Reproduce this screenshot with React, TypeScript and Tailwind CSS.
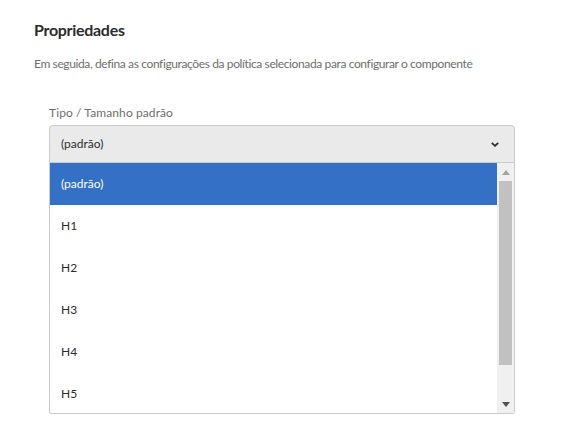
const items = ['H1', 'H2', 'H3', 'H4', 'H5'];

const App = () => {
  return (
    <div className="w-[562px] h-[442px] bg-white pl-[34px] pt-[18px] font-['Lato',sans-serif] overflow-hidden">
      <h2 className="text-[16px] font-bold text-[#2c2c2c] leading-[24px] tracking-[-0.3px]">Propriedades</h2>
      <p className="mt-[14px] text-[12px] text-[#6e6e6e] leading-[16px] tracking-[-0.38px]">
        Em seguida, defina as configurações da política selecionada para configurar o componente
      </p>
      <div className="ml-[15px] mt-[33px] w-[466px]">
        <label className="block text-[12px] text-[#6e6e6e] leading-[16px] tracking-[0.1px]">Tipo / Tamanho padrão</label>
        <div className="mt-[4px] h-[38px] flex items-center justify-between pl-[11px] pr-[15px] bg-[#eaeaea] border border-[#cacaca] rounded-t-[4px] text-[12px] text-[#2c2c2c]">
          <span>(padrão)</span>
          <svg width="8" height="5" viewBox="0 0 8 5">
            <path d="M0.8 0.8l3.2 3L7.2 0.8" fill="none" stroke="#2c2c2c" strokeWidth="1.8" />
          </svg>
        </div>
        <div className="h-[251px] flex border border-t-0 border-[#cacaca] rounded-b-[3px] bg-white">
          <ul className="flex-1 text-[12px] text-[#2c2c2c]">
            <li className="h-[42px] flex items-center pl-[11px] bg-[#3470c6] text-white">(padrão)</li>
            {items.map((h) => (
              <li key={h} className="h-[42px] flex items-center pl-[11px]">{h}</li>
            ))}
          </ul>
          <div className="w-[17px] bg-[#f0f0f0] flex flex-col items-center">
            <svg className="mt-[7px]" width="8" height="5" viewBox="0 0 8 5">
              <path d="M0 5L4 0L8 5Z" fill="#a3a3a3" />
            </svg>
            <div className="mt-[6px] w-[13px] h-[184px] bg-[#c1c1c1]" />
            <div className="flex-1" />
            <svg className="mb-[6px]" width="8" height="5" viewBox="0 0 8 5">
              <path d="M0 0L8 0L4 5Z" fill="#505050" />
            </svg>
          </div>
        </div>
      </div>
    </div>
  );
};

export default App;
